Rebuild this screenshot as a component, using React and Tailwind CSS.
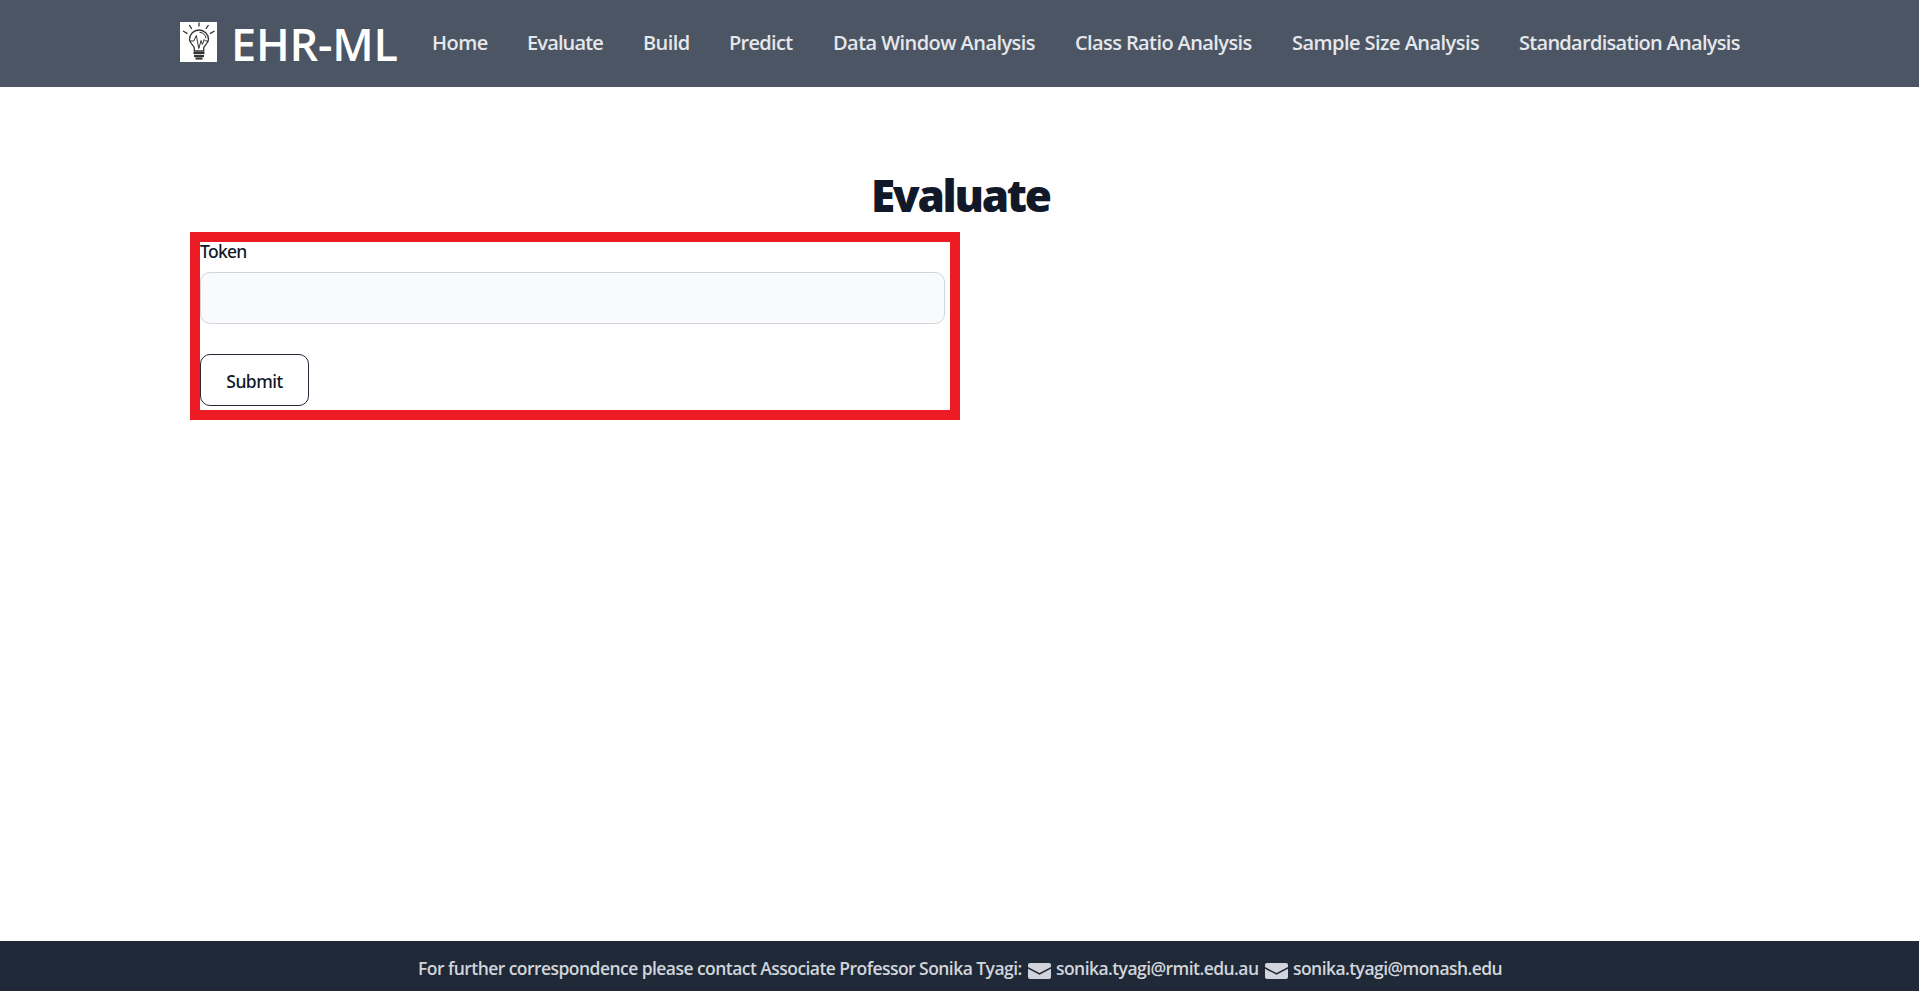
import React from "react";

const NAV = [
  { label: "Home", box: "w-[95px]", text: "tracking-[-0.5px]" },
  { label: "Evaluate", box: "w-[116px]", text: "tracking-[-0.85px]" },
  { label: "Build", box: "w-[86px]", text: "tracking-[-0.6px]" },
  { label: "Predict", box: "w-[104px]", text: "tracking-[-0.7px]" },
  { label: "Data Window Analysis", box: "w-[242px]", text: "tracking-[-0.56px]" },
  { label: "Class Ratio Analysis", box: "w-[217px]", text: "tracking-[-0.6px]" },
  { label: "Sample Size Analysis", box: "w-[227px]", text: "tracking-[-0.55px]" },
  { label: "Standardisation Analysis", box: "w-[222px]", text: "tracking-[-0.71px]" },
];

function BulbLogo() {
  return (
    <svg viewBox="0 0 37 40" className="h-10 w-[37px] shrink-0 bg-white" fill="none" stroke="#333" strokeWidth="1.3">
      <path d="M19 0.5v4M9.300 3l2.400 3.800M28.500 3l-2.600 3.800M3 9l4.500 2.600M34.500 9l-4.500 2.600" />
      <path d="M14.300 29v-3c0-2-4.800-5-4.800-8.500a9.500 9.500 0 0 1 19 0c0 3.500-4.800 6.500-4.800 8.500v3z" />
      <path d="M19.500 10.300c3.500.2 6 2.500 6.500 6" strokeWidth="1" />
      <path d="M9.500 19h4.300l2.500-5.500 2.500 13 2.300-8 1.300 4 1.800-5 1.300 1.500h3" strokeWidth="1" />
      <path d="M13.500 31h11" strokeWidth="2.200" />
      <path d="M14 34h10" strokeWidth="2.200" />
      <path d="M15.500 36.500h7" strokeWidth="2.200" />
    </svg>
  );
}

function MailIcon({ className }) {
  return (
    <svg viewBox="0 0 23 16" className={"h-4 w-[23px] shrink-0 " + className} fill="#d1d5db">
      <path d="M0 5.700 11.500 11.800 23 5.700V14a2 2 0 0 1-2 2H2a2 2 0 0 1-2-2z" />
      <path d="M0 4V2a2 2 0 0 1 2-2h19a2 2 0 0 1 2 2v2L11.500 10.100z" />
    </svg>
  );
}

export default function App() {
  return (
    <div className="flex h-[991px] flex-col bg-white font-['Open_Sans',sans-serif]">
      <header className="flex h-[87px] shrink-0 items-center bg-[#4b5563] pl-[180px] whitespace-nowrap">
        <div className="flex w-[252px] items-center">
          <div className="pb-[3px]">
            <BulbLogo />
          </div>
          <span className="pl-[14px] text-[45px] leading-[60px] font-semibold tracking-[-0.2px] text-white">EHR-ML</span>
        </div>
        <nav className="flex pb-[1px] text-[20px] leading-7 font-semibold text-[#e5e7eb]">
          {NAV.map((item) => (
            <a key={item.label} className={"shrink-0 " + item.box + " " + item.text}>{item.label}</a>
          ))}
        </nav>
      </header>

      <main className="flex grow flex-col pt-[78px]">
        <h1 className="pl-[871px] text-[44px] leading-[60px] font-extrabold tracking-[-2.3px] text-[#111827]">Evaluate</h1>
        <form className="mt-[7px] ml-[190px] h-[188px] w-[770px] border-[10px] border-[#ed1c24] font-['Noto_Sans',sans-serif]">
          <label className="block h-[30px] text-[17.500px] leading-[19px] font-medium tracking-[-0.7px] text-[#111827]">Token</label>
          <input className="block h-[52px] w-[745px] rounded-[10px] border border-[#d1d5db] bg-[#f9fafb]" />
          <button type="button" className="mt-[30px] block h-[52px] w-[109px] rounded-[10px] border border-[#1f2937] pt-[2px] text-[17.500px] font-medium tracking-[-0.5px] text-[#111827]">
            Submit
          </button>
        </form>
      </main>

      <footer className="flex h-[50px] shrink-0 items-center bg-[#1f2937] pt-[4px] pl-[417px] text-[17.500px] leading-7 font-semibold whitespace-nowrap text-[#d1d5db]">
        <span className="w-[611px] pl-px tracking-[-0.55px]">For further correspondence please contact Associate Professor Sonika Tyagi:</span>
        <MailIcon className="mt-[5px]" />
        <span className="w-[214px] pl-[5px] tracking-[-0.56px]">sonika.tyagi@rmit.edu.au</span>
        <MailIcon className="mt-[5px]" />
        <span className="pl-[5px] tracking-[-0.56px]">sonika.tyagi@monash.edu</span>
      </footer>
    </div>
  );
}
